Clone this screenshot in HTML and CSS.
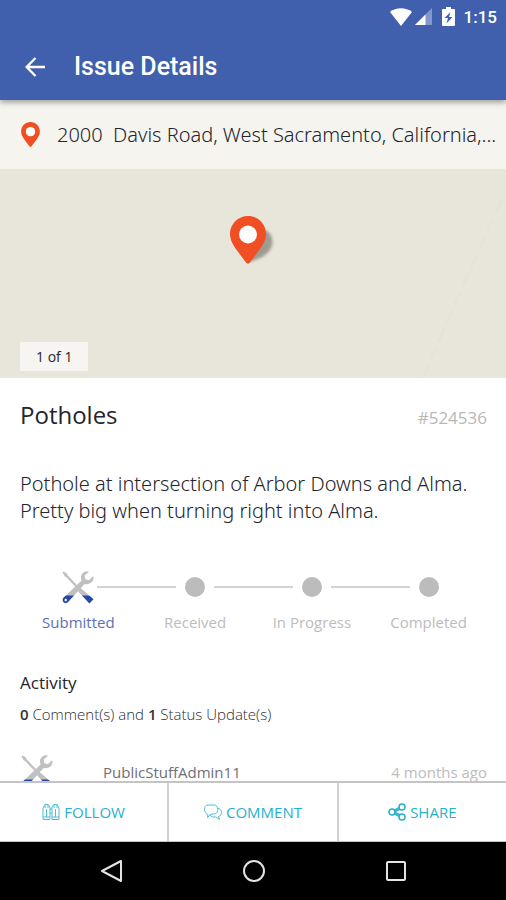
FILE: index.html
```html
<!DOCTYPE html>
<html lang="en">
<head>
<meta charset="utf-8">
<meta name="viewport" content="width=device-width, initial-scale=1">
<title>Issue Details</title>
<link rel="stylesheet" href="styles.css">
</head>
<body>
<svg class="defs" aria-hidden="true">
  <defs>
    <linearGradient id="handle" gradientUnits="userSpaceOnUse" x1="0" y1="0" x2="0" y2="36">
      <stop offset="0.74" stop-color="#bfc0c2"/>
      <stop offset="0.76" stop-color="#2449a6"/>
    </linearGradient>
    <symbol id="tools" viewBox="0 0 36 36">
      <path fill="url(#handle)" d="M29 1.500C25 .8 20.800 4 21.200 8.500L21.800 11 2.500 29.500C1.200 31 1.500 33.300 3 34.500 4.500 35.500 6.300 35.300 7.500 34L25 14.800C29.500 16 34.500 13 34.500 8L33.800 6.500 29.500 10.800 25.800 9.800 25 6.200 29.300 2.200Z"/>
      <path fill="url(#handle)" d="M1.500 2.500 3 1.500 6.500 4 7 5.500 18.500 17.800 22 20 34.500 31 30 35.500 18.500 23 17 19.500 5.500 7.500 4 7Z"/>
      <circle cx="5" cy="31.800" r="1.300" fill="#fff"/>
    </symbol>
    <symbol id="pin" viewBox="0 0 36 48">
      <path fill="#f04e23" d="M18 0C8 0 0 8 0 18 0 27 7 34 16 46.500 17 48 19 48 20 46.500 29 34 36 27 36 18 36 8 28 0 18 0Z"/>
      <circle cx="18" cy="18.500" r="9" fill="#fff"/>
    </symbol>
  </defs>
</svg>

<header class="top">
  <div class="status">
    <svg class="status-icon wifi" viewBox="0 0 22 18" aria-hidden="true"><path fill="#fff" d="M0 4C6-1 16-1 22 4L11 18Z"/></svg>
    <svg class="status-icon signal" viewBox="0 0 18 18" aria-hidden="true"><path fill="#8297cc" d="M18 0V17H1Z"/><path fill="#fff" d="M11.500 6.500V17H1Z"/></svg>
    <svg class="status-icon battery" viewBox="0 0 13 19" aria-hidden="true"><path fill="#fff" d="M4 0H9V2H12Q13 2 13 3V18Q13 19 12 19H1Q0 19 0 18V3Q0 2 1 2H4Z"/><path fill="#405fad" d="M8.500 5 2.500 11H6L4.500 16.500 10.500 10H7Z"/></svg>
    <time class="clock">1:15</time>
  </div>
  <div class="appbar">
    <button class="back" type="button" aria-label="Back">
      <svg viewBox="0 0 20 20" aria-hidden="true"><path fill="none" stroke="#fff" stroke-width="2.300" d="M20 10H2M10.500 1 1.600 10 10.500 19"/></svg>
    </button>
    <h1 class="title">Issue Details</h1>
  </div>
</header>

<main class="content">
  <div class="address">
    <svg class="address-pin" aria-hidden="true"><use href="#pin"/></svg>
    <span class="address-text">2000&nbsp; Davis Road, West Sacramento, California,...</span>
  </div>

  <section class="map" aria-label="Map">
    <svg class="map-road" viewBox="0 0 84 200" aria-hidden="true"><path fill="none" stroke="#e5e2d7" stroke-width="2" stroke-dasharray="14 6" d="M1 200 33 126 82 16"/></svg>
    <svg class="map-pin" viewBox="0 0 48 48" aria-hidden="true">
      <defs><filter id="soft" x="-30%" y="-30%" width="160%" height="160%"><feGaussianBlur stdDeviation="1.500"/></filter></defs>
      <path filter="url(#soft)" fill="#77756d" fill-opacity=".65" d="M18 46 34 14C42 16 45 26 40 34 35 41 26 44 18 46Z"/>
      <use href="#pin" width="36" height="48"/>
    </svg>
    <span class="counter">1 of 1</span>
  </section>

  <section class="details">
    <div class="heading">
      <h2 class="name">Potholes</h2>
      <span class="number">#524536</span>
    </div>
    <p class="description">Pothole at intersection of Arbor Downs and Alma. Pretty big when turning right into Alma.</p>

    <ol class="steps">
      <li class="step current"><span class="track"><svg class="tools" aria-hidden="true"><use href="#tools"/></svg></span>Submitted</li>
      <li class="step"><span class="track"><i class="dot"></i></span>Received</li>
      <li class="step"><span class="track"><i class="dot"></i></span>In Progress</li>
      <li class="step"><span class="track"><i class="dot"></i></span>Completed</li>
    </ol>

    <h3 class="activity-title">Activity</h3>
    <p class="summary"><b>0</b> Comment(s) and <b>1</b> Status Update(s)</p>

    <article class="entry">
      <svg class="avatar" aria-hidden="true"><use href="#tools"/></svg>
      <span class="author">PublicStuffAdmin11</span>
      <time class="when">4 months ago</time>
    </article>
  </section>
</main>

<div class="actions">
  <button class="action" type="button">
    <svg viewBox="0 0 18 18" aria-hidden="true"><path d="M1 16.500V5L3 1.500H6L8 4V16.500ZM10 16.500V4L12 1.500H15L17 5V16.500ZM8 6H10M8 10H10M1 14H8M10 14H17M3 1.500V5M6 1.500V5M12 1.500V5M15 1.500V5M4.500 6V14M13.500 6V14"/></svg>
    FOLLOW
  </button>
  <button class="action" type="button">
    <svg viewBox="0 0 18 18" aria-hidden="true"><path d="M4 11.500C-1 10-.5 2 4 2H10C15 2 15 11 10 11H7L3.500 14.500ZM14 5.500C18.500 5.500 18.500 13 14.500 13.500L15.500 16.500 11.500 14H9C7.500 14 6.500 13 6.500 12"/></svg>
    COMMENT
  </button>
  <button class="action share" type="button">
    <svg viewBox="0 0 18 18" aria-hidden="true"><circle cx="4" cy="9" r="3"/><circle cx="14" cy="4" r="3"/><circle cx="14" cy="14" r="3"/><path d="M6.500 7.200 11 4.700M7 8.600 12 6.300M6.500 10.800 11 13.300M7 9.400 12 11.700"/></svg>
    SHARE
  </button>
</div>

<nav class="system" aria-label="System">
  <button class="key" type="button" aria-label="Back"><svg viewBox="0 0 24 24" aria-hidden="true"><path d="M21 2V22L2 12Z"/></svg></button>
  <button class="key" type="button" aria-label="Home"><svg viewBox="0 0 24 24" aria-hidden="true"><circle cx="12" cy="12" r="10"/></svg></button>
  <button class="key" type="button" aria-label="Recent apps"><svg viewBox="0 0 24 24" aria-hidden="true"><rect x="3" y="3" width="18" height="18" rx="1"/></svg></button>
</nav>
</body>
</html>
```
FILE: styles.css
```css
* {
  box-sizing: border-box;
}

body {
  margin: 0;
  height: 100vh;
  display: flex;
  flex-direction: column;
  background: #fff;
  color: #24242e;
  font-family: "Open Sans", "Noto Sans", sans-serif;
}

h1, h2, h3, p, ol {
  margin: 0;
  padding: 0;
  font-weight: 400;
}

button {
  border: 0;
  padding: 0;
  background: none;
  font: inherit;
  cursor: pointer;
}

svg {
  display: block;
}

.defs {
  position: absolute;
  width: 0;
  height: 0;
}

.top {
  flex: none;
  position: relative;
  z-index: 1;
  background: #405fad;
  color: #fff;
  font-family: Roboto, sans-serif;
  font-weight: 500;
  box-shadow: 0 2px 6px rgba(0, 0, 0, 0.4);
}

.status {
  display: flex;
  align-items: center;
  justify-content: flex-end;
  height: 33px;
  padding-right: 9px;
}

.wifi {
  width: 22px;
  height: 18px;
}

.signal {
  width: 18px;
  height: 18px;
  margin-left: 2px;
}

.battery {
  width: 13px;
  height: 19px;
  margin: 0 9px 0 10px;
}

.clock {
  font-size: 17px;
}

.appbar {
  display: flex;
  align-items: center;
  gap: 29px;
  height: 67px;
  padding-left: 25px;
}

.back svg {
  width: 20px;
  height: 20px;
}

.title {
  font-size: 25px;
  font-weight: 500;
}

.content {
  flex: 1;
  min-height: 0;
  overflow: hidden;
}

.address {
  display: flex;
  align-items: center;
  gap: 17px;
  height: 69px;
  padding-left: 21px;
  background: #f5f4ef;
}

.address-pin {
  flex: none;
  width: 19px;
  height: 25px;
}

.address-text {
  overflow: hidden;
  white-space: nowrap;
  font-family: "Noto Sans", "Open Sans", sans-serif;
  font-size: 20px;
  font-weight: 350;
}

.map {
  position: relative;
  display: flex;
  flex-direction: column;
  justify-content: space-between;
  height: 209px;
  padding: 47px 18px 7px 20px;
  background: #e8e5da;
}

.map-road {
  position: absolute;
  right: 0;
  bottom: 0;
  width: 84px;
  height: 200px;
}

.map-pin {
  align-self: center;
  width: 48px;
  height: 48px;
}

.counter {
  align-self: flex-start;
  padding: 0 16px;
  background: #f6f5f1;
  font-size: 14px;
  line-height: 29px;
}

.details {
  padding: 20px 19px 0 20px;
}

.heading {
  display: flex;
  align-items: baseline;
  justify-content: space-between;
}

.name {
  font-size: 24px;
  line-height: 34px;
}

.number {
  color: #b8b8b8;
  font-size: 17px;
}

.description {
  margin-top: 38px;
  font-family: "Noto Sans", "Open Sans", sans-serif;
  font-size: 20px;
  font-weight: 350;
  line-height: 27px;
}

.steps {
  display: grid;
  grid-template-columns: repeat(4, 1fr);
  margin-top: 45px;
  list-style: none;
}

.step {
  color: #bcbcbc;
  font-size: 15px;
  line-height: 20px;
  text-align: center;
}

.current {
  color: #5c6fb9;
}

.track {
  display: grid;
  grid-template-columns: 1fr 38px 1fr;
  align-items: center;
  justify-items: center;
  height: 36px;
  margin-bottom: 7px;
}

.track::before,
.track::after {
  content: "";
  width: 100%;
  height: 2px;
  background: #d3d3d3;
}

.step:first-child .track::before,
.step:last-child .track::after {
  visibility: hidden;
}

.tools {
  width: 34px;
  height: 34px;
}

.dot {
  width: 20px;
  height: 20px;
  border-radius: 50%;
  background: #bcbcbc;
}

.activity-title {
  margin-top: 39px;
  font-size: 17px;
  line-height: 24px;
}

.summary {
  margin-top: 9px;
  color: #2c2c30;
  font-size: 15px;
  font-weight: 300;
  line-height: 20px;
}

.summary b {
  color: #333;
  font-weight: 600;
}

.entry {
  display: flex;
  align-items: flex-start;
  margin-top: 30px;
  font-size: 15px;
  line-height: 36px;
}

.avatar {
  width: 34px;
  height: 34px;
}

.author {
  margin-left: 49px;
  color: #707074;
}

.when {
  margin-left: auto;
  color: #bcbcbc;
}

.actions {
  flex: none;
  display: grid;
  grid-template-columns: repeat(3, 1fr);
  gap: 2px;
  height: 61px;
  border-top: 2px solid #c4c4c4;
  border-bottom: 1px solid #c4c4c4;
  background: #d2d2d2;
}

.action {
  display: flex;
  align-items: center;
  justify-content: center;
  gap: 4px;
  background: #fff;
  color: #26b0cb;
  font-size: 15px;
}

.action svg {
  width: 18px;
  height: 18px;
  fill: none;
  stroke: #4cbfd4;
  stroke-width: 1;
}

.share svg {
  stroke: #26b0cb;
  stroke-width: 1.5;
}

.system {
  flex: none;
  display: flex;
  justify-content: center;
  gap: 118px;
  height: 58px;
  padding-left: 2px;
  background: #000;
}

.key svg {
  width: 24px;
  height: 24px;
  fill: none;
  stroke: #e4e4e4;
  stroke-width: 2;
  stroke-linejoin: round;
}
```
